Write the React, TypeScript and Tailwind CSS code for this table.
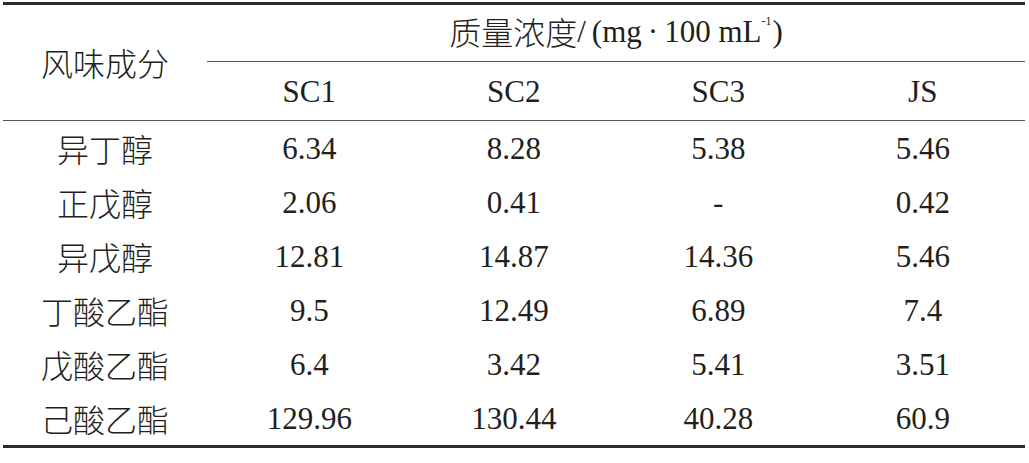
import React from 'react';

const serif = "font-['Liberation_Serif']";
const cjk = "font-['Noto_Sans_CJK_SC'] text-[32px] font-light";

const rows: [string, string, string, string, string][] = [
  ['异丁醇', '6.34', '8.28', '5.38', '5.46'],
  ['正戊醇', '2.06', '0.41', '-', '0.42'],
  ['异戊醇', '12.81', '14.87', '14.36', '5.46'],
  ['丁酸乙酯', '9.5', '12.49', '6.89', '7.4'],
  ['戊酸乙酯', '6.4', '3.42', '5.41', '3.51'],
  ['己酸乙酯', '129.96', '130.44', '40.28', '60.9'],
];

const App: React.FC = () => {
  return (
    <div className={`w-[1029px] h-[463px] bg-white text-[#231f20] text-[31px] leading-none ${serif}`}>
      <div className="pt-[2px] pl-[3px]">
        <div className="w-[1022px] border-t-[3px] border-b-[3px] border-[#2b2b2b]">
          {/* Header */}
          <div className="flex border-b border-[#555]">
            <div className="w-[204px] flex items-center justify-center pb-[2px]">
              <span className={cjk}>风味成分</span>
            </div>
            <div className="flex-1">
              <div className="h-[57px] flex items-center justify-center border-b border-[#555] pb-[4px]">
                <span className={cjk}>质量浓度</span>
                <span>/</span>
                <span className="ml-[6px]">(mg</span>
                <span className="mx-[6px]">·</span>
                <span>100 mL</span>
                <sup className="text-[12px] -top-[10px]">-1</sup>
                <span className="ml-[1px]">)</span>
              </div>
              <div className="h-[58px] grid grid-cols-4 items-center text-center">
                <span>SC1</span>
                <span>SC2</span>
                <span>SC3</span>
                <span>JS</span>
              </div>
            </div>
          </div>

          {/* Body */}
          {rows.map((r) => (
            <div key={r[0]} className="h-[54px] grid grid-cols-[204px_repeat(4,1fr)] items-center text-center">
              <span className={cjk}>{r[0]}</span>
              <span>{r[1]}</span>
              <span>{r[2]}</span>
              <span>{r[3]}</span>
              <span>{r[4]}</span>
            </div>
          ))}
        </div>
      </div>
    </div>
  );
};

export default App;
